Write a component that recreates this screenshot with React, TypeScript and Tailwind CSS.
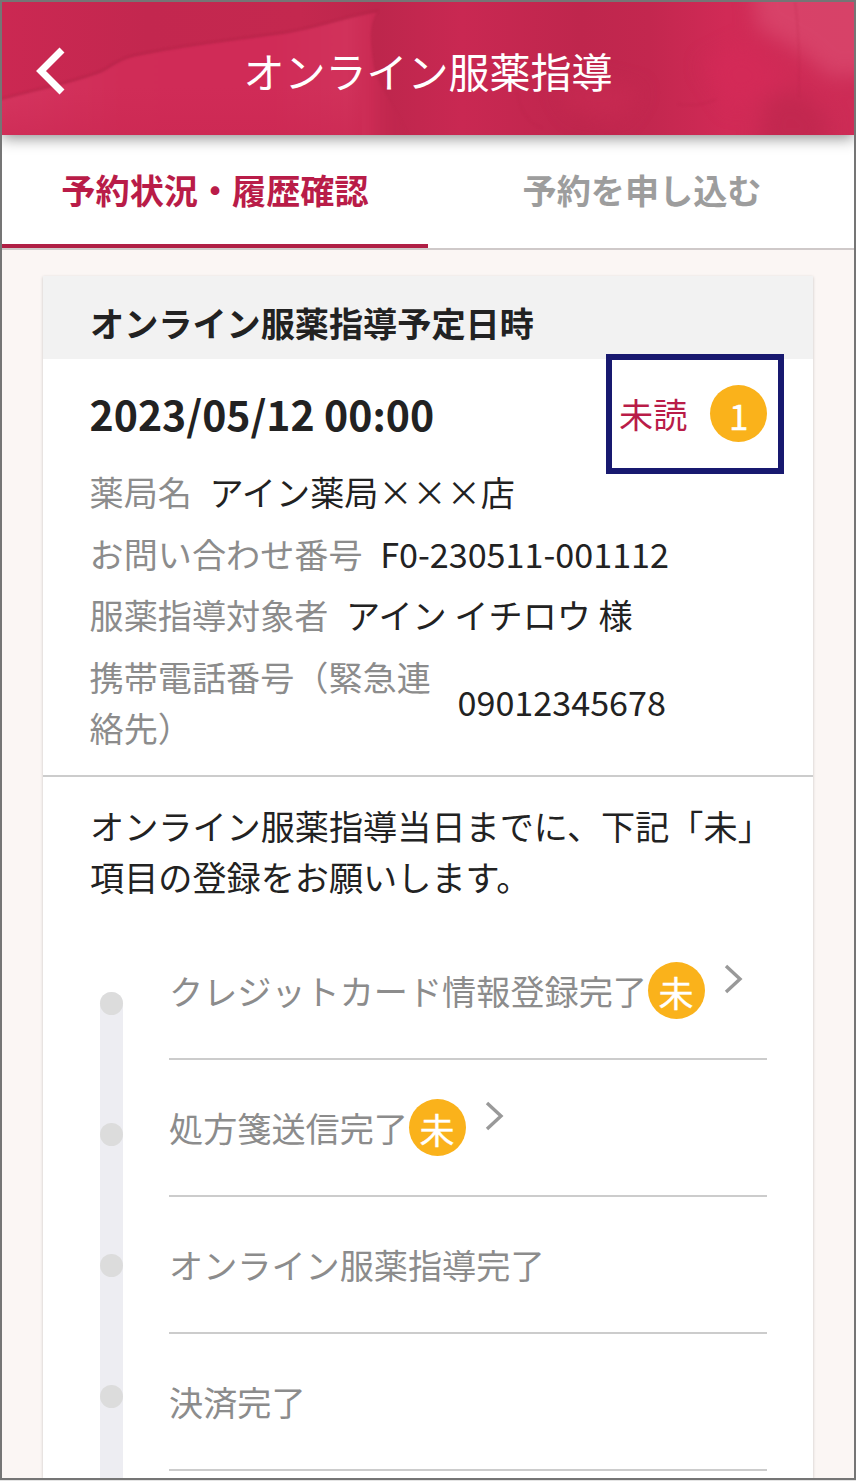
type Step = { label: string; pending?: boolean }

const STEPS: Step[] = [
  { label: 'クレジットカード情報登録完了', pending: true },
  { label: '処方箋送信完了', pending: true },
  { label: 'オンライン服薬指導完了' },
  { label: '決済完了' },
]

function HeaderTexture() {
  return (
    <svg className="absolute inset-0 h-full w-full" viewBox="0 0 852 133" preserveAspectRatio="none" aria-hidden>
      <defs>
        <linearGradient id="base" x1="0" x2="1" y1="0" y2="0">
          <stop offset="0" stopColor="#cb2852" />
          <stop offset="0.17" stopColor="#c3274f" />
          <stop offset="0.35" stopColor="#c4284f" />
          <stop offset="0.44" stopColor="#bd264c" />
          <stop offset="0.54" stopColor="#c92852" />
          <stop offset="0.68" stopColor="#bf264d" />
          <stop offset="0.76" stopColor="#c3274f" />
          <stop offset="0.85" stopColor="#d12a56" />
          <stop offset="1" stopColor="#cd2c56" />
        </linearGradient>
        <linearGradient id="wash" gradientUnits="userSpaceOnUse" x1="0" x2="410" y1="0" y2="0">
          <stop offset="0" stopColor="#d63660" />
          <stop offset="0.3" stopColor="#d02c57" />
          <stop offset="0.65" stopColor="#d02b57" />
          <stop offset="0.84" stopColor="#d1325b" />
          <stop offset="0.9" stopColor="#cb2b54" />
          <stop offset="1" stopColor="#bd264c" stopOpacity="0" />
        </linearGradient>
        <linearGradient id="fade" x1="0" x2="0" y1="0" y2="1">
          <stop offset="0" stopColor="#cb2852" stopOpacity="0" />
          <stop offset="1" stopColor="#cb2852" stopOpacity="0.6" />
        </linearGradient>
        <filter id="soft" x="-40%" y="-40%" width="180%" height="180%" colorInterpolationFilters="sRGB">
          <feGaussianBlur stdDeviation="10" />
        </filter>
        <filter id="edge" colorInterpolationFilters="sRGB">
          <feGaussianBlur stdDeviation="1.2" />
        </filter>
      </defs>
      <rect width="852" height="133" fill="url(#base)" />
      <path
        d="M-4 98C30 88 75 80 102 68C112 62 118 57 130 54C180 43 230 38 280 31C315 26 345 14 376 9C366 22 368 40 372 66C380 92 395 108 410 140H-4Z"
        fill="url(#wash)"
        filter="url(#edge)"
      />
      <path
        d="M-4 98C30 88 75 80 102 68C112 62 118 57 130 54C180 43 230 38 280 31C315 26 345 14 376 9"
        fill="none"
        stroke="#ad2145"
        strokeOpacity="0.6"
        strokeWidth="2"
        filter="url(#edge)"
      />
      <rect y="85" width="360" height="48" fill="url(#fade)" />
      <g filter="url(#soft)">
        <path d="M750 -25H880V70L828 75L800 50L755 25Z" fill="#dc4c70" fillOpacity="0.7" />
        <path d="M700 62L745 40L785 80L730 108Z" fill="#d62a58" fillOpacity="0.6" />
        <path d="M765 95L800 90L828 118L820 150H755Z" fill="#be264d" fillOpacity="0.7" />
        <path d="M555 85L585 75L640 88L620 118L570 112Z" fill="#cc2b54" fillOpacity="0.5" />
      </g>
      <path
        d="M793 0C796 20 798 55 797 95M515 90C518 108 525 120 540 126M676 102C690 105 705 102 714 97"
        fill="none"
        stroke="#b62449"
        strokeOpacity="0.4"
        filter="url(#edge)"
      />
    </svg>
  )
}

function Badge({ children }: { children: React.ReactNode }) {
  return (
    <span className="flex h-[57px] w-[57px] shrink-0 items-center justify-center rounded-full bg-[#fab21b] pt-0.5 text-[35px] leading-none text-white [-webkit-text-stroke:0.4px_white]">
      {children}
    </span>
  )
}

function InfoRow({ label, value }: { label: string; value: string }) {
  return (
    <div className="flex items-center">
      <dt className="max-w-[350.5px] text-[#8c8c8c]">{label}</dt>
      <dd className="ml-[17.5px] whitespace-nowrap">{value}</dd>
    </div>
  )
}

function StepRow({ step }: { step: Step }) {
  return (
    <li className="flex h-[137px] items-center border-b-2 border-[#cccccc] text-[#8c8c8c]">
      <span className="mr-[0.6px] whitespace-nowrap pt-0.5">{step.label}</span>
      {step.pending && (
        <>
          <Badge>未</Badge>
          <svg className="mb-[22px] ml-[19px] h-[30px] w-5" viewBox="0 0 20 30" fill="none" stroke="#999999" strokeWidth="3.4">
            <path d="M2 2L16 15L2 28" />
          </svg>
        </>
      )}
    </li>
  )
}

export default function App() {
  return (
    <div className="h-[1481px] w-[856px] overflow-hidden bg-[#e4e4e4] font-['Noto_Sans_CJK_JP',sans-serif] text-[34.15px] leading-[51.3px] text-[#222222]">
      <div className="flex h-[1480px] flex-col overflow-hidden border-2 border-[#757575] bg-[#fbf6f4]">
        <header className="relative z-10 flex h-[133px] shrink-0 items-center justify-center shadow-[0_3px_14px_rgba(0,0,0,0.45)]">
          <HeaderTexture />
          <svg className="absolute left-[33px] top-[45px] h-12 w-8" viewBox="0 0 32 48" fill="none" stroke="#ffffff" strokeWidth="7">
            <path d="M27 3L6 24L27 45" />
          </svg>
          <h1 className="relative pt-[5px] text-[41px] text-white">オンライン服薬指導</h1>
        </header>

        <nav className="flex h-[115px] shrink-0 border-b-2 border-[#cfc9c9] bg-white text-center font-bold">
          <button className="w-[426px] border-b-[4px] border-[#b01f45] text-[#b91c48]">予約状況・履歴確認</button>
          <button className="flex-1 pb-[4px] pl-[2px] text-[#9d9d9d]">予約を申し込む</button>
        </nav>

        <main className="mx-[41px] mt-[26px] flex w-[770px] flex-1 flex-col bg-white shadow-[0_1px_3px_rgba(0,0,0,0.2)]">
          <h2 className="flex h-[83px] shrink-0 items-center bg-[#f2f2f2] pl-[47px] pt-[10px] font-bold">オンライン服薬指導予定日時</h2>

          <section className="h-[418px] shrink-0 border-b-2 border-[#cccccc] pl-[46.5px]">
            <div className="flex h-[108px] items-center">
              <p className="pt-0.5 text-[41px] font-bold">2023/05/12 00:00</p>
              <div className="ml-auto mr-[29px] mt-[1px] flex h-[120px] w-[178px] shrink-0 items-center border-[6px] border-[#18196f] pl-[7px] text-[#b91c48]">
                <span>未読</span>
                <span className="ml-[23px]">
                  <Badge>1</Badge>
                </span>
              </div>
            </div>
            <dl className="-mt-px flex flex-col gap-[10.3px]">
              <InfoRow label="薬局名" value="アイン薬局×××店" />
              <InfoRow label="お問い合わせ番号" value="F0-230511-001112" />
              <InfoRow label="服薬指導対象者" value="アイン イチロウ 様" />
              <InfoRow label="携帯電話番号（緊急連絡先）" value="09012345678" />
            </dl>
          </section>

          <section className="flex flex-1 flex-col pl-[47px] pt-[23px]">
            <p className="w-[684px] leading-[50.5px]">オンライン服薬指導当日までに、下記「未」項目の登録をお願いします。</p>
            <div className="mt-[21.5px] flex flex-1">
              <div className="ml-[10px] mt-[69px] flex w-[23px] flex-col gap-[108.3px] rounded-t-full bg-[#ededf2]">
                {STEPS.map((step) => (
                  <span key={step.label} className="h-[23px] w-[23px] shrink-0 rounded-full bg-[#dcdcdc]" />
                ))}
              </div>
              <ol className="ml-[46px] w-[598px]">
                {STEPS.map((step) => (
                  <StepRow key={step.label} step={step} />
                ))}
              </ol>
            </div>
          </section>
        </main>
      </div>
    </div>
  )
}
